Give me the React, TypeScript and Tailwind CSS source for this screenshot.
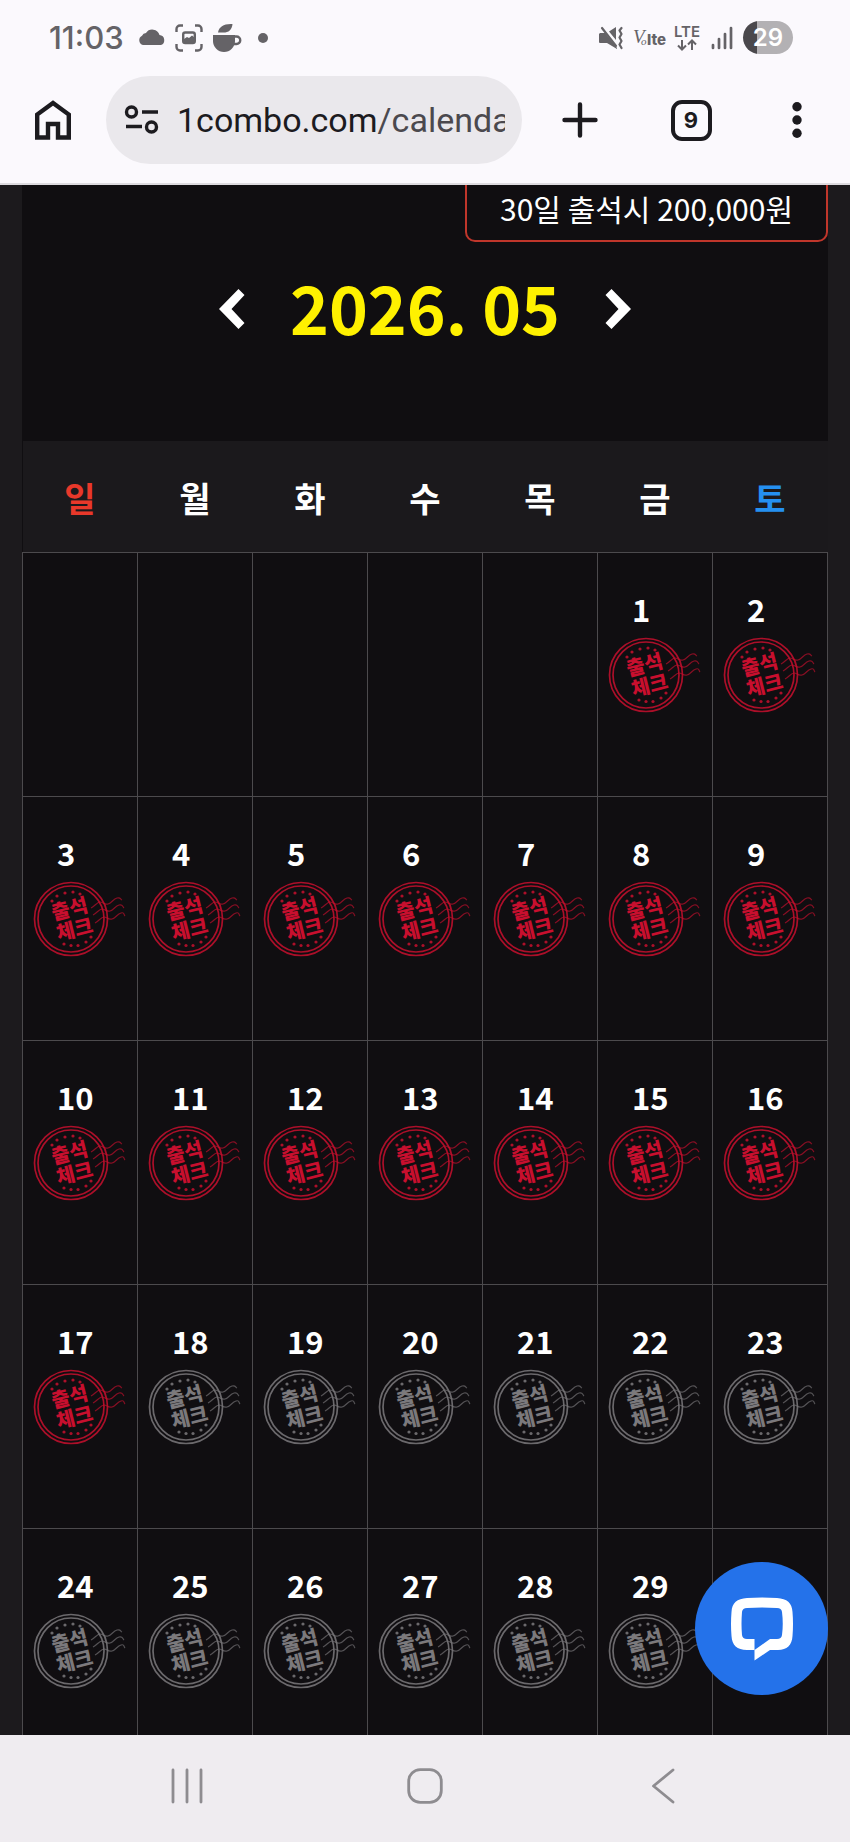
import React, { useState } from 'react'

const WEEKDAYS = [
  { label: '일', color: 'text-[#e8382a]' },
  { label: '월', color: 'text-white' },
  { label: '화', color: 'text-white' },
  { label: '수', color: 'text-white' },
  { label: '목', color: 'text-white' },
  { label: '금', color: 'text-white' },
  { label: '토', color: 'text-[#2590f0]' }
]

const LAST_CHECKED_DAY = 17

const STARS = [
  [-19, -18],
  [-14, -23],
  [-6, -26],
  [2, -27],
  [9, -25],
  [-7, 25],
  [0, 26.5],
  [7, 26.5],
  [15, 23],
  [20, 18]
]

const getWeeks = (year: number, month: number) => {
  const offset = new Date(year, month - 1, 1).getDay()
  const total = new Date(year, month, 0).getDate()
  const cells: (number | null)[] = Array.from({ length: offset }, () => null)
  for (let day = 1; day <= total; day++) cells.push(day)
  while (cells.length % 7 !== 0) cells.push(null)
  return Array.from({ length: cells.length / 7 }, (_, i) => cells.slice(i * 7, i * 7 + 7))
}

const Stamp = ({ checked }: { checked: boolean }) => (
  <svg
    className={`block h-[76px] w-[94px] ${checked ? 'text-[#c80f2e]' : 'text-[#7b797c]'}`}
    viewBox="-38 -38 94 76"
    fill="none"
    stroke="currentColor"
    role="img"
    aria-label={checked ? '출석 완료' : '미출석'}
  >
    <circle r="36.500" strokeWidth="1.700" opacity="0.85" />
    <circle r="33" strokeWidth="1.700" opacity="0.85" />
    {STARS.map(([x, y]) => (
      <circle key={`${x}${y}`} cx={x} cy={y} r="1.600" fill="currentColor" stroke="none" opacity="0.85" />
    ))}
    {/* Postmark waves */}
    <g strokeWidth="1.200" opacity="0.65">
      <path d="M20 -11C24 -13 26 -17 29 -17S33 -14 37 -15S42 -20 46 -21S49 -20 51 -19" />
      <path d="M22 -4C26 -6 28 -10 31 -10S35 -7 39 -8S44 -13 48 -14S51 -13 53 -11" />
      <path d="M24 4C28 2 30 -2 33 -2S37 1 41 0S46 -5 50 -6S52 -5 54 -3" />
    </g>
    <g
      transform="rotate(-14)"
      fill="currentColor"
      stroke="none"
      fontFamily="'Noto Sans CJK KR', sans-serif"
      fontWeight="900"
      fontSize="20"
      textAnchor="middle"
    >
      <text x="1" y="-3">
        출석
      </text>
      <text x="1" y="18">
        체크
      </text>
    </g>
  </svg>
)

const StatusBar = () => (
  <div className="flex h-[76px] items-center justify-between pt-px pl-[49px] pr-[57px] pb-3 text-[#656367]">
    <div className="flex items-center pt-2.5">
      <span className="w-[89px] text-[31px] leading-8 font-medium">11:03</span>
      <svg className="h-7 w-7" viewBox="0 0 28 28" fill="currentColor">
        <path d="M5 21a5 5 0 0 1-1-9.3A4.500 4.500 0 0 1 8 9a7.500 7.500 0 0 1 13.500 2A5.200 5.200 0 0 1 23 21z" />
      </svg>
      <svg className="ml-[9px] h-7 w-7" viewBox="0 0 28 28" fill="none" stroke="currentColor" strokeWidth="2.4">
        <path d="M1.500 8V5a3.500 3.500 0 0 1 3.500-3.500h3M20 1.500h3A3.500 3.500 0 0 1 26.500 5v3M26.500 20v3a3.500 3.500 0 0 1-3.500 3.500h-3M8 26.500H5A3.500 3.500 0 0 1 1.500 23v-3" />
        <rect x="8.200" y="8.500" width="11.600" height="10.500" rx="2" />
        <path d="M9 15l3-2 2 1 3-2.500 2.500 2v5H9z" fill="currentColor" stroke="none" />
      </svg>
      <svg className="ml-[9px] h-[30px] w-[30px]" viewBox="0 0 30 30" fill="currentColor">
        <path d="M6 9.500C7 3.500 12 .5 20.500 1c-.5 6-4 8.500-9 8.500z" />
        <path d="M1 12h22v6a11 11 0 0 1-22 0z" />
        <path d="M22 13.500h2.500a3.300 3.300 0 0 1 0 7.500H22" fill="none" stroke="currentColor" strokeWidth="2.400" />
      </svg>
      <span className="ml-4 h-[10px] w-[10px] rounded-full bg-[#656367]" />
    </div>
    <div className="flex items-center pt-2.5">
      <svg className="h-6 w-6" viewBox="0 0 24 24" fill="none" stroke="currentColor">
        <path d="M1 7h5l12 15v1L8 17H1a1 1 0 0 1-1-1V8zM10 5.500L17 1v13z" fill="currentColor" stroke="none" />
        <path d="M3 2l14 18" strokeWidth="2.200" strokeLinecap="round" />
        <path d="M22.500 2l-2 2.500 2 3.500-2 3.500 2 3.500-2 3.500 2 3.500" strokeWidth="2.200" strokeLinecap="round" strokeLinejoin="round" />
      </svg>
      <svg className="ml-2.5 h-6 w-[34px]" viewBox="0 0 34 24" fill="currentColor">
        <text x="0" y="17" fontFamily="'Liberation Serif', serif" fontStyle="italic" fontSize="19">
          V
        </text>
        <text x="8" y="19" fontFamily="'Liberation Serif', serif" fontStyle="italic" fontSize="11">
          o
        </text>
        <text x="14" y="19" fontFamily="Inter, sans-serif" fontWeight="800" fontSize="15">
          lte
        </text>
      </svg>
      <div className="ml-1.5 flex w-7 flex-col items-center">
        <span className="text-[15px] leading-[14px] font-semibold">LTE</span>
        <svg className="h-3 w-[22px]" viewBox="0 0 22 12" fill="none" stroke="currentColor" strokeWidth="2">
          <path d="M6 1v9M2 6.500l4 4 4-4M16 11V2M12 5.500l4-4 4 4" />
        </svg>
      </div>
      <svg className="ml-2.5 h-6 w-[22px]" viewBox="0 0 22 24" stroke="currentColor" strokeWidth="2.700" strokeLinecap="round">
        <path d="M2 19v3M8 13v9M14 8v14M20 2v20" />
      </svg>
      <div className="ml-2.5 h-[33px] w-[50px] rounded-full bg-linear-to-r from-[#4a484c] from-28% to-[#b3b1b4] to-28% text-center text-[24px] leading-[33px] font-semibold text-white">
        29
      </div>
    </div>
  </div>
)

const Toolbar = () => (
  <div className="flex items-center pb-[19px] text-[#1c1b1f]">
    <button aria-label="Home" className="flex h-[88px] w-[106px] items-center justify-center">
      <svg className="h-[42px] w-[38px]" viewBox="0 0 38 42" fill="none" stroke="currentColor" strokeWidth="4.400">
        <path d="M3.200 38.500V15.500L19 4l15.800 11.500v23H24V25H14v13.500z" />
      </svg>
    </button>
    <div className="flex h-[88px] min-w-0 flex-1 items-center rounded-full bg-[#eae8ec] pr-[17px] pl-[18px]">
      <svg className="h-[34px] w-9 shrink-0" viewBox="0 0 36 34" fill="none" stroke="currentColor" strokeWidth="3.400">
        <circle cx="7.500" cy="9" r="5" />
        <path d="M18 9h16M2 23.500h16" />
        <circle cx="27.500" cy="24" r="5" />
      </svg>
      <div className="ml-[17px] flex-1 overflow-hidden font-[Roboto] text-[34px] leading-[44px] whitespace-nowrap">
        1combo.com<span className="text-[#4b494e]">/calendar</span>
      </div>
    </div>
    <button aria-label="New tab" className="flex h-[88px] w-[116px] items-center justify-center">
      <svg className="h-9 w-9" viewBox="0 0 36 36" stroke="currentColor" strokeWidth="4.400" strokeLinecap="round">
        <path d="M18 2.500v31M2.500 18h31" />
      </svg>
    </button>
    <button aria-label="Tabs" className="flex h-[88px] w-[106px] items-center justify-center">
      <span className="flex h-[41px] w-[41px] items-center justify-center rounded-[11px] border-4 border-[#1c1b1f] text-[22px] leading-6 font-bold">
        9
      </span>
    </button>
    <button aria-label="Menu" className="flex h-[88px] w-[106px] items-center justify-center">
      <svg className="h-9 w-3" viewBox="0 0 12 36" fill="currentColor">
        <circle cx="6" cy="4.700" r="4.700" />
        <circle cx="6" cy="18" r="4.700" />
        <circle cx="6" cy="31.300" r="4.700" />
      </svg>
    </button>
  </div>
)

const Calendar = () => {
  const [current, setCurrent] = useState({ year: 2026, month: 5 })

  const moveMonth = (step: number) => {
    const next = new Date(current.year, current.month - 1 + step, 1)
    setCurrent({ year: next.getFullYear(), month: next.getMonth() + 1 })
  }

  return (
    <div className="mx-[22px] bg-[#100e11] font-['Noto_Sans_CJK_KR',sans-serif]">
      <div className="flex justify-end">
        <p className="rounded-b-[10px] border-2 border-t-0 border-[#c0362b] px-[33px] pb-[9px] text-[30px] leading-[46px] text-white">
          30일 출석시 200,000원
        </p>
      </div>

      {/* Month switcher */}
      <div className="flex items-center justify-center gap-[44px] pt-[19px] pb-[84px]">
        <button aria-label="이전 달" onClick={() => moveMonth(-1)}>
          <svg className="block h-10 w-[28px]" viewBox="0 0 28 40" fill="white">
            <path d="M20.500 0L1 20l19.500 20 6-6L13.500 20l13-14z" />
          </svg>
        </button>
        <h1 className="pb-1.5 text-[66px] leading-[90px] font-bold text-[#fff100]">
          {current.year}. {String(current.month).padStart(2, '0')}
        </h1>
        <button aria-label="다음 달" onClick={() => moveMonth(1)}>
          <svg className="block h-10 w-[28px]" viewBox="0 0 28 40" fill="white">
            <path d="M7.500 0L27 20 7.500 40l-6-6 13-14-13-14z" />
          </svg>
        </button>
      </div>

      <table className="w-full table-fixed border-collapse text-white">
        <thead>
          <tr className="h-[111px] bg-[#1b191c]">
            {WEEKDAYS.map((day) => (
              <th key={day.label} scope="col" className={`pt-1 text-[34px] leading-[48px] font-bold ${day.color}`}>
                {day.label}
              </th>
            ))}
          </tr>
        </thead>
        <tbody>
          {getWeeks(current.year, current.month).map((week, weekIndex) => (
            <tr key={weekIndex} className="h-[244px]">
              {week.map((day, index) => (
                <td key={index} className="border border-[#4c4a4d] p-0 align-top">
                  {day && (
                    <div className="pt-[33px] pl-[10px]">
                      <p className="pb-[5px] pl-6 text-[31px] leading-[46px] font-bold">{day}</p>
                      <Stamp checked={day <= LAST_CHECKED_DAY} />
                    </div>
                  )}
                </td>
              ))}
            </tr>
          ))}
        </tbody>
      </table>
    </div>
  )
}

const BottomNav = () => (
  <nav className="grid h-[107px] shrink-0 grid-cols-3 bg-[#efecf0] px-[8%] pb-[5px] text-[#8e8c90]">
    <button aria-label="Recents" className="flex items-center justify-center">
      <svg className="h-9 w-9" viewBox="0 0 36 36" stroke="currentColor" strokeWidth="2.800" strokeLinecap="round">
        <path d="M4 2v32M18 2v32M32 2v32" />
      </svg>
    </button>
    <button aria-label="Home screen" className="flex items-center justify-center">
      <svg className="h-9 w-9" viewBox="0 0 36 36" fill="none" stroke="currentColor" strokeWidth="2.800">
        <rect x="1.700" y="1.700" width="32.600" height="32.600" rx="11.500" />
      </svg>
    </button>
    <button aria-label="Back" className="flex items-center justify-center">
      <svg className="h-9 w-6" viewBox="0 0 24 36" fill="none" stroke="currentColor" strokeWidth="2.800" strokeLinecap="round" strokeLinejoin="round">
        <path d="M22 2L2.500 18 22 34" />
      </svg>
    </button>
  </nav>
)

const App = () => {
  return (
    <div className="flex h-screen flex-col overflow-hidden bg-[#1c1a1d] font-[Inter,sans-serif]">
      <header className="shrink-0 border-b-2 border-[#dddbdf] bg-[#fbf9fd]">
        <StatusBar />
        <Toolbar />
      </header>

      <main className="relative flex min-h-0 flex-1 flex-col">
        <div className="min-h-0 flex-1 overflow-y-auto [scrollbar-width:none]">
          <Calendar />
        </div>
        <button
          aria-label="채팅 상담"
          className="absolute right-[22px] bottom-10 flex h-[133px] w-[133px] items-center justify-center rounded-full bg-[#2472ea]"
        >
          <svg className="h-16 w-16" viewBox="0 0 64 64" fill="white">
            <path
              fillRule="evenodd"
              d="M17 1Q32 0 47 1C57 1.500 62 6 62.500 15Q63.500 27 62.500 39C62 48 57 53 48 53H40L24.500 63.500V53H17C7 53 2 48 1.500 39Q.5 27 1.500 15C2 6 7 1.500 17 1zM17 11Q32 10 47 11Q51.500 11 52 15Q53.500 27 52 38Q51.500 42 47 42H40L24.500 53V42H17Q12.500 42 12 38Q11 27 12 15Q12.500 11 17 11z"
            />
          </svg>
        </button>
      </main>

      <BottomNav />
    </div>
  )
}

export default App
